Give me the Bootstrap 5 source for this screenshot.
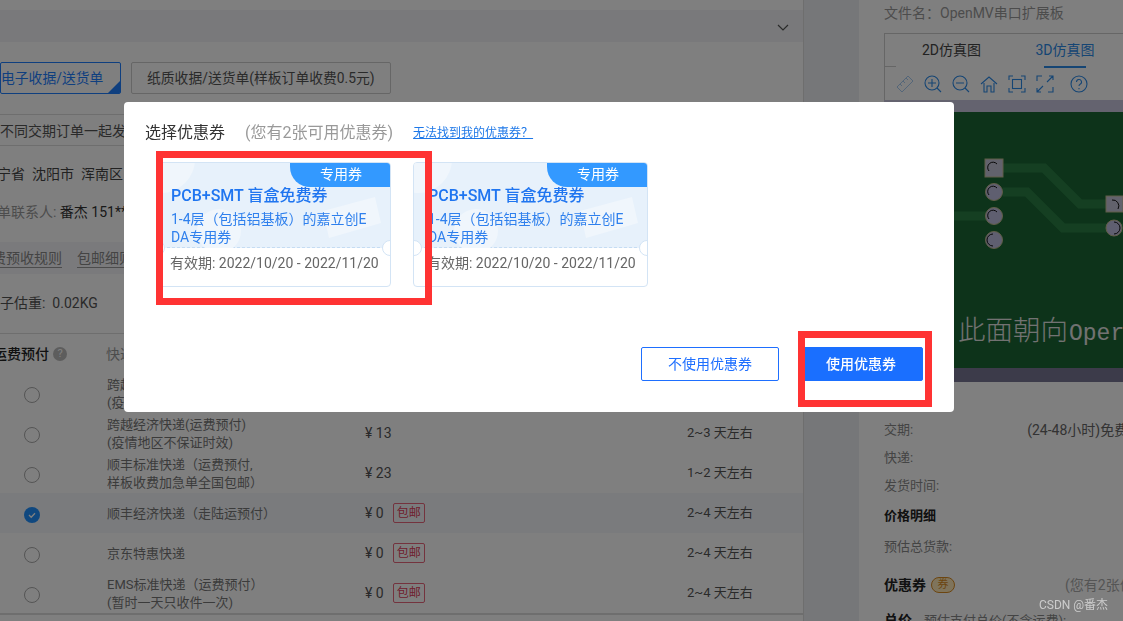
<!DOCTYPE html>
<html lang="zh-CN">
<head>
  <meta charset="UTF-8">
  <title>选择优惠券</title>
  <link href="https://cdn.jsdelivr.net/npm/bootstrap@5.3.0/dist/css/bootstrap.min.css" rel="stylesheet">
  <style>
    body {
      height: 621px;
      overflow: hidden;
      background: #fff;
      color: #555;
      font: 13px/18px Roboto, "Noto Sans CJK SC", sans-serif;
    }
    .page-wrap { height: 621px; }

    /* left: order form */
    .order-pane { width: 804px; flex: none; overflow: hidden; border-right: 1px solid #ddd; padding-top: 10px; font-size: 14px; }
    .fold-bar { height: 32px; background: #f2f3f6; padding: 4px 14px 0 0; }
    .receipt-row { margin-top: 20px; height: 32px; }
    .receipt-btn { height: 32px; border: 1px solid #ccc; border-radius: 2px; background: #fff; color: #555; padding: 0 15px; font-size: 13.8px; white-space: nowrap; }
    .receipt-on { width: 121px; margin-right: 10px; padding: 0 21px 0 0; text-align: right; border-color: #1e7fff; color: #1e7fff; position: relative; overflow: hidden; }
    .receipt-on::after { content: ""; position: absolute; right: 0; bottom: 0; border: 6px solid transparent; border-right-color: #1e7fff; border-bottom-color: #1e7fff; }
    .mixed-row { margin-top: 20px; height: 32px; padding-top: 1px; border-top: 1px solid #ddd; border-bottom: 1px solid #ddd; white-space: nowrap; }
    .info-row { height: 28px; white-space: nowrap; }
    .addr-row { margin-top: 14px; color: #444; }
    .contact-row { margin-top: 10px; color: #333; }
    .muted-label { color: #999; }
    .rule-bar { margin-top: 16px; height: 32px; background: #f4f5f8; color: #888; white-space: nowrap; }
    .rule-bar span { border-bottom: 1px solid #999; line-height: 18px; margin-right: 15px; }
    .weight-row { margin-top: 15px; margin-bottom: 16px; }
    .cut-22 { margin-left: -22px; }
    .cut-14 { margin-left: -14px; }
    .cut-7 { margin-left: -7px; }
    .cut-17 { margin-left: -17px; }
    .ship-head { height: 40px; border-top: 1px solid #ddd; white-space: nowrap; }
    .ship-head b { font-weight: 500; color: #222; }
    .ship-head .first-cell { width: 106px; flex: none; }
    .help-dot { width: 14px; height: 14px; border-radius: 50%; background: #bbb; color: #fff; font-size: 11px; line-height: 14px; text-align: center; margin-left: 4px; }
    .ship-body { border-bottom: 2px solid #ddd; }
    .ship-row { height: 40px; font-size: 13px; }
    .ship-row.is-picked { background: #f4f6fa; }
    .pick-cell { width: 107px; flex: none; padding: 4px 0 0 24px; }
    .pick-dot { display: block; width: 16px; height: 16px; border: 1px solid #aaa; border-radius: 50%; background: #fff; }
    .pick-dot.is-on { border: 0; background: #2090ff; }
    .pick-dot svg { display: block; }
    .name-cell { width: 258px; flex: none; padding-top: 1px; color: #777; }
    .price-cell { width: 322px; flex: none; font-size: 14px; }
    .free-tag { width: 32px; height: 20px; line-height: 18px; margin-left: 9px; border: 1px solid #e8667c; border-radius: 2px; color: #e0405c; text-align: center; font-size: 12px; }

    .gutter-strip { width: 55px; flex: none; background: #eceef2; }

    /* right: preview and price */
    .side-pane { flex: 1; min-width: 0; padding-left: 25px; overflow: hidden; background: #fff; white-space: nowrap; font-size: 13px; }
    .file-line { height: 33px; font-size: 14px; line-height: 26px; color: #999; }
    .sim-box { height: 68px; border: 1px solid #ccc; border-right: 0; width: 260px; }
    .sim-tabs { height: 33px; font-size: 14px; color: #444; }
    .sim-tab { line-height: 33px; text-align: center; position: relative; }
    .sim-tab.first-tab { width: 133px; }
    .sim-tab.second-tab { width: 94px; color: #2b8ae8; }
    .sim-tab.second-tab::after { content: ""; position: absolute; left: 26px; bottom: -1px; width: 42px; height: 2px; background: #2b8ae8; }
    .short-line { position: absolute; left: 0; bottom: 0; width: 11px; height: 1px; background: #ccc; }
    .sim-tools { height: 33px; padding-left: 11px; gap: 10px; color: #2b8ae8; }
    .sim-tools svg { display: block; flex: none; }
    .help-tool { margin-left: 6px; }
    .pcb-view { display: block; width: 239px; height: 282px; margin-top: -1px; }
    .pcb-cjk { font-family: "Noto Sans CJK SC", sans-serif; font-size: 27.5px; font-weight: 300; fill: #e4e4e4; }
    .pcb-latin { font-family: "Liberation Mono", monospace; font-size: 23px; fill: #e4e4e4; }
    .price-list { margin-top: 34px; }
    .price-row { height: 28px; color: #888; }
    .price-row .col-value { margin-left: 114px; color: #666; font-size: 14px; }
    .price-title { color: #222; font-weight: 700; height: 32px; }
    .price-title + .price-row { margin-top: 1px; }
    .coupon-row { color: #222; font-weight: 700; height: 28px; margin-top: 10px; font-size: 14px; }
    .coupon-mark { width: 24px; height: 16px; line-height: 14px; margin-left: 5px; border: 1px solid #d98a20; border-radius: 8px; background: #ffe9b8; color: #d98a20; font-size: 11px; font-weight: 400; text-align: center; flex: none; }
    .coupon-note { margin-left: 110px; color: #aaa; font-weight: 400; font-size: 14px; flex: none; }
    .total-row { margin-top: 12px; color: #888; }
    .total-row b { color: #222; margin-right: 12px; font-size: 14px; }

    /* coupon dialog */
    .coupon-dialog { width: 830px; max-width: none; margin: 102px 0 0 124px; }
    .coupon-dialog .modal-content { height: 310px; border: 0; border-radius: 4px; padding: 22px 31px 31px 21px; color: #333; }
    .dialog-title { height: 18px; margin-bottom: 20px; font-size: 16px; white-space: nowrap; }
    .dialog-count { margin-left: 20px; color: #999; font-size: 16px; }
    .dialog-help { margin-left: 20px; color: #1e78e8; font-size: 12px; }
    .ticket-list { gap: 22px; margin-left: 11px; }
    .ticket { width: 235px; height: 125px; border: 1px solid #d3e4f5; border-radius: 4px; position: relative; overflow: hidden; }
    .ticket-top { height: 85px; padding: 23px 14px 0 14px; background: #e7f1fb; border-bottom: 1px dashed #c5dcf3; color: #2f80ed; position: relative; }
    .ticket-art { position: absolute; left: 0; top: 0; }
    .ticket-name { position: relative; font-size: 16px; line-height: 20px; font-weight: 500; color: #1f75f0; white-space: nowrap; }
    .ticket-desc { position: relative; width: 200px; margin-top: 4px; font-size: 14px; line-height: 18px; word-break: break-all; }
    .ticket-tag { position: absolute; right: 0; top: 0; width: 100px; height: 24px; line-height: 22px; background: #3399ff; border-bottom-left-radius: 20px; color: #fff; font-size: 14px; text-align: center; padding-left: 2px; }
    .ticket-date { padding: 6px 0 0 13px; font-size: 14px; color: #666; line-height: 18px; white-space: nowrap; }
    .ticket-notch { position: absolute; top: 77px; width: 16px; height: 16px; background: #fff; border: 1px solid #d3e4f5; border-radius: 50%; }
    .notch-left { left: -8px; }
    .notch-right { right: -8px; }
    .dialog-actions { gap: 20px; }
    .coupon-btn { width: 138px; height: 34px; padding: 0; border-radius: 2px; font-size: 14px; }
    .coupon-btn.btn-outline-primary { --bs-btn-color: #1e6fff; --bs-btn-border-color: #1e6fff; }
    .coupon-btn.btn-primary { width: 124px; --bs-btn-bg: #1a6fff; --bs-btn-border-color: #1a6fff; font-weight: 500; }

    /* red annotation frames */
    .red-frame { position: absolute; border: 7px solid #ff3333; pointer-events: none; }
    .frame-ticket { left: 32px; top: 49px; width: 276px; height: 154px; }
    .frame-button { left: 674px; top: 229px; width: 134px; height: 76px; }

    .csdn-mark { position: absolute; left: 1039px; top: 596px; z-index: 1060; color: #ccc; font-size: 12px; white-space: nowrap; }
  </style>
</head>
<body>
  <div class="page-wrap d-flex">
    <!-- 左侧订单 -->
    <div class="order-pane">
      <div class="fold-bar d-flex align-items-center justify-content-end">
        <svg width="12" height="8" viewBox="0 0 12 8" fill="none" stroke="#555" stroke-width="1.2"><path d="M1 1l5 5 5-5"/></svg>
      </div>
      <div class="receipt-row d-flex">
        <button class="receipt-btn receipt-on">电子收据/送货单</button>
        <button class="receipt-btn">纸质收据/送货单(样板订单收费0.5元)</button>
      </div>
      <div class="mixed-row d-flex align-items-center"><span class="cut-14">与不同交期订单一起发货</span></div>
      <div class="info-row addr-row d-flex align-items-center"><span class="cut-17">辽宁省&nbsp; 沈阳市 &nbsp;浑南区</span></div>
      <div class="info-row contact-row d-flex align-items-center"><span class="cut-17"><span class="muted-label">下单联系人:</span> 番杰 151****</span></div>
      <div class="rule-bar d-flex align-items-center"><span class="cut-22">运费预收规则</span><span>包邮细则</span></div>
      <div class="info-row weight-row d-flex align-items-center"><span class="cut-14">盒子估重:&nbsp; 0.02KG</span></div>
      <div class="ship-head d-flex align-items-center">
        <div class="first-cell d-flex align-items-center"><b class="cut-7">运费预付</b><span class="help-dot">?</span></div>
        <div class="muted-label">快递方式</div>
      </div>
      <div class="ship-body" id="ship-list"></div>
    </div>
    <div class="gutter-strip"></div>

    <!-- 右侧预览 -->
    <div class="side-pane">
      <div class="file-line">文件名：OpenMV串口扩展板</div>
      <div class="sim-box">
        <div class="sim-tabs d-flex position-relative">
          <div class="short-line"></div>
          <div class="sim-tab first-tab">2D仿真图</div>
          <div class="sim-tab second-tab">3D仿真图</div>
        </div>
        <div class="sim-tools d-flex align-items-center">
          <svg width="18" height="18" viewBox="0 0 18 18" fill="none" stroke="#a9cdf2" stroke-width="1"><path d="M1 12L12 1l5 5L6 17z M4 9l2 2 M7 6l2 2 M10 3l2 2"/></svg>
          <svg width="18" height="18" viewBox="0 0 18 18" fill="none" stroke="currentColor" stroke-width="1.1"><circle cx="8" cy="8" r="7"/><path d="M13 13l4 4M4 8h8M8 4v8"/></svg>
          <svg width="18" height="18" viewBox="0 0 18 18" fill="none" stroke="currentColor" stroke-width="1.1"><circle cx="8" cy="8" r="7"/><path d="M13 13l4 4M4 8h8"/></svg>
          <svg width="18" height="18" viewBox="0 0 18 18" fill="none" stroke="currentColor" stroke-width="1.1"><path d="M1 9l8-7 8 7M4 8v9h3v-6h4v6h3V8"/></svg>
          <svg width="18" height="18" viewBox="0 0 18 18" fill="none" stroke="currentColor" stroke-width="1.1"><path d="M1 5V1h4M13 1h4v4M17 13v4h-4M5 17H1v-4"/><rect x="4.5" y="4.5" width="9" height="9"/></svg>
          <svg width="18" height="18" viewBox="0 0 18 18" fill="none" stroke="currentColor" stroke-width="1.1"><path d="M11 7l6-6M13 1h4v4M7 11l-6 6M1 13v4h4M1 6V1h5M17 12v5h-5"/></svg>
          <svg class="help-tool" width="18" height="18" viewBox="0 0 18 18" fill="none" stroke="currentColor" stroke-width="1.1"><circle cx="9" cy="9" r="8"/><path d="M6.5 7a2.5 2.5 0 1 1 3.6 2.2c-.8.4-1.1.9-1.1 1.8M9 13v1.2"/></svg>
        </div>
      </div>
      <svg class="pcb-view" viewBox="0 0 239 282" aria-label="PCB 3D 预览">
        <rect width="239" height="282" fill="#c8c6de"/>
        <rect y="12" width="239" height="256" fill="#1a6634"/>
        <rect y="268" width="239" height="14" fill="#787694"/>
        <g fill="none" stroke="#2a7f45" stroke-width="9">
          <path d="M119 68h41l36 36h43"/>
          <path d="M119 92h24l36 36h60"/>
          <path d="M70 116h40"/>
        </g>
        <g fill="#bebee0" stroke="#c0bb90">
          <rect x="101" y="59" width="18" height="18" fill="#c4c4d8"/>
          <circle cx="110" cy="92" r="8.5"/>
          <circle cx="110" cy="116" r="8.5"/>
          <circle cx="110" cy="140" r="8.5"/>
          <rect x="222" y="96" width="17" height="16" fill="#c4c4d8"/>
          <circle cx="230" cy="128" r="8"/>
        </g>
        <g fill="none" stroke="#111" stroke-width="1">
          <path d="M105 71a5 5 0 0 1 8-7"/>
          <path d="M105 95a5 5 0 0 1 8-7"/>
          <path d="M105 119a5 5 0 0 1 8-7"/>
          <path d="M109 146a6 6 0 0 1 0-12"/>
          <path d="M228 100a6 6 0 0 1 6 9"/>
          <path d="M230 122a6 6 0 0 1 0 12"/>
        </g>
        <text x="74" y="240"><tspan class="pcb-cjk">此面朝向</tspan><tspan class="pcb-latin" dx="1">Oper</tspan></text>
      </svg>
      <div class="price-list">
        <div class="price-row d-flex align-items-center">交期:<span class="col-value">(24-48小时)免费</span></div>
        <div class="price-row d-flex align-items-center">快递:</div>
        <div class="price-row d-flex align-items-center">发货时间:</div>
        <div class="price-title d-flex align-items-center">价格明细</div>
        <div class="price-row d-flex align-items-center">预估总货款:</div>
        <div class="coupon-row d-flex align-items-center">优惠券<span class="coupon-mark">券</span><span class="coupon-note">(您有2张优惠券)</span></div>
        <div class="total-row"><b>总价</b>预估支付总价(不含运费):</div>
      </div>
    </div>
  </div>

  <div class="modal-backdrop show"></div>
  <div class="modal d-block" tabindex="-1">
    <div class="modal-dialog coupon-dialog">
      <div class="modal-content">
        <div class="dialog-title d-flex align-items-center">
          <span>选择优惠券</span>
          <span class="dialog-count">(您有2张可用优惠券)</span>
          <a class="dialog-help" href="#">无法找到我的优惠券？</a>
        </div>
        <div class="ticket-list d-flex" id="ticket-list"></div>
        <div class="dialog-actions d-flex justify-content-end mt-auto">
          <button class="btn btn-outline-primary coupon-btn">不使用优惠券</button>
          <button class="btn btn-primary coupon-btn">使用优惠券</button>
        </div>
        <div class="red-frame frame-ticket"></div>
        <div class="red-frame frame-button"></div>
      </div>
    </div>
  </div>
  <div class="csdn-mark">CSDN @番杰</div>

  <script src="https://cdn.jsdelivr.net/npm/bootstrap@5.3.0/dist/js/bootstrap.bundle.min.js"></script>
  <script>
    // 快递列表
    const shipRows = [
      { name: '跨越标准快递(运费预付)<br>(疫情地区不保证时效)', price: '18', days: '1~2' },
      { name: '跨越经济快递(运费预付)<br>(疫情地区不保证时效)', price: '13', days: '2~3' },
      { name: '顺丰标准快递（运费预付,<br>样板收费加急单全国包邮）', price: '23', days: '1~2' },
      { name: '顺丰经济快递（走陆运预付）', price: '0', days: '2~4', free: true, picked: true },
      { name: '京东特惠快递', price: '0', days: '2~4', free: true },
      { name: 'EMS标准快递（运费预付）<br>(暂时一天只收件一次)', price: '0', days: '2~4', free: true }
    ];
    const check = '<svg width="16" height="16" viewBox="0 0 16 16" fill="none" stroke="#fff" stroke-width="1.3"><path d="M5 8l2.2 2.2L11 6.2"/></svg>';
    document.getElementById('ship-list').innerHTML = shipRows.map(r => `
      <div class="ship-row d-flex align-items-center${r.picked ? ' is-picked' : ''}">
        <div class="pick-cell"><span class="pick-dot${r.picked ? ' is-on' : ''}">${r.picked ? check : ''}</span></div>
        <div class="name-cell">${r.name}</div>
        <div class="price-cell d-flex align-items-center">¥ ${r.price}${r.free ? '<span class="free-tag">包邮</span>' : ''}</div>
        <div>${r.days} 天左右</div>
      </div>`).join('');

    // 优惠券
    const art = `<svg class="ticket-art" width="235" height="85" viewBox="0 0 235 85" fill="#f0f6fc">
      <circle cx="4" cy="-4" r="34"/><circle cx="62" cy="68" r="22"/>
      <path d="M166 48l52-14 6 26-52 15z"/></svg>`;
    document.getElementById('ticket-list').innerHTML = [1, 2].map(() => `
      <div class="ticket">
        <div class="ticket-top">
          ${art}
          <div class="ticket-name">PCB+SMT 盲盒免费券</div>
          <div class="ticket-desc">1-4层（包括铝基板）的嘉立创EDA专用券</div>
        </div>
        <div class="ticket-tag">专用券</div>
        <div class="ticket-date">有效期: 2022/10/20 - 2022/11/20</div>
        <div class="ticket-notch notch-left"></div>
        <div class="ticket-notch notch-right"></div>
      </div>`).join('');
  </script>
</body>
</html>
